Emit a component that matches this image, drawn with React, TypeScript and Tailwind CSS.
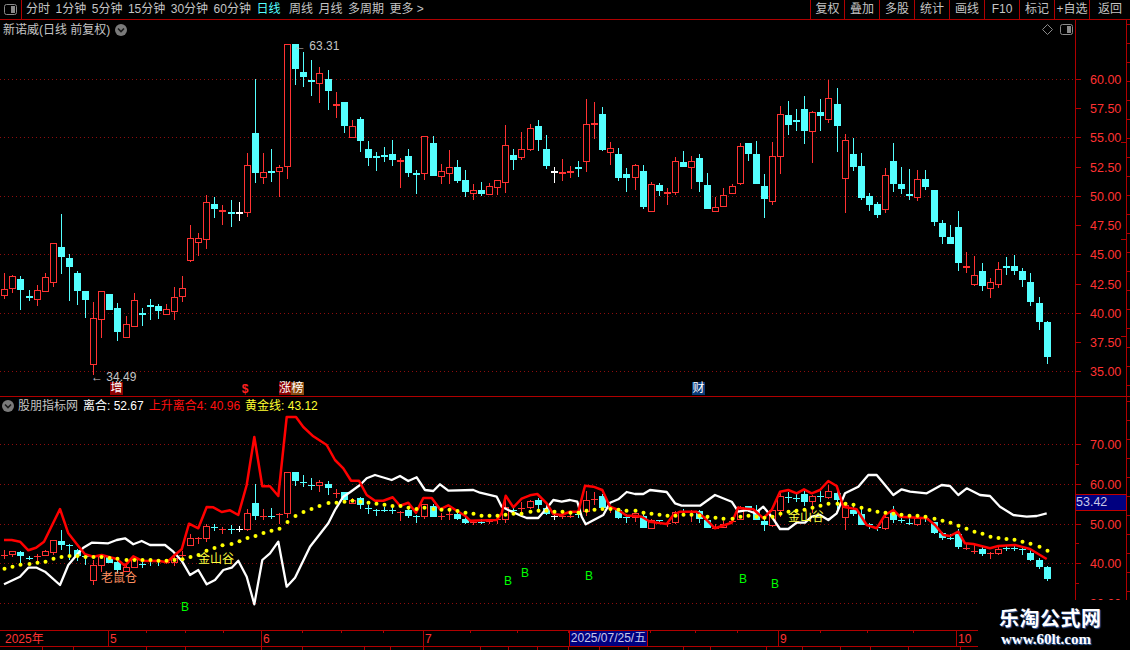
import React from "react";

type C = [number, number, number, number, "r" | "c" | "w"];

// high y, body top y, body bottom y, low y, kind
const candles: C[] = [
  [273,289,296,299,"r"],[275,276,289,293,"r"],[276,279,290,310,"c"],[290,296,299,301,"c"],[285,290,300,306,"r"],
  [273,277,292,292,"r"],[243,243,283,287,"r"],[214,247,257,274,"c"],[254,258,267,301,"c"],[271,273,291,305,"c"],
  [291,291,300,318,"c"],[302,318,365,375,"r"],[291,291,320,338,"r"],[294,294,310,310,"c"],[303,308,332,341,"c"],
  [316,324,338,338,"r"],[293,300,327,327,"r"],[308,313,315,326,"c"],[299,305,308,320,"c"],[304,306,311,319,"c"],
  [304,309,315,315,"r"],[287,297,312,320,"r"],[276,288,297,302,"r"],[225,238,261,262,"r"],[233,238,243,256,"r"],
  [195,202,240,249,"r"],[197,204,209,218,"c"],[205,210,213,225,"r"],[200,212,213,227,"c"],[202,212,213,221,"w"],
  [153,165,213,217,"r"],[79,133,173,183,"c"],[153,172,178,184,"r"],[149,171,172,182,"c"],[165,167,172,197,"r"],
  [44,44,167,179,"r"],[44,44,69,85,"c"],[52,72,77,87,"c"],[60,80,81,96,"c"],[67,73,84,103,"r"],
  [70,79,91,110,"c"],[92,104,105,118,"r"],[102,102,126,133,"c"],[120,126,138,138,"r"],[117,119,141,152,"c"],
  [141,149,158,166,"c"],[152,156,157,171,"c"],[147,155,158,162,"c"],[140,154,160,166,"c"],[158,160,162,188,"r"],
  [149,156,173,177,"c"],[170,173,176,194,"c"],[136,136,174,180,"r"],[136,143,176,176,"c"],[164,171,177,184,"r"],
  [150,167,174,184,"r"],[160,167,181,183,"c"],[170,180,192,197,"c"],[184,190,194,200,"r"],[182,190,194,196,"c"],
  [183,186,195,195,"r"],[180,180,188,195,"r"],[125,145,183,193,"r"],[149,155,160,170,"c"],[132,149,158,160,"r"],
  [124,128,150,151,"r"],[120,126,140,151,"c"],[135,149,166,169,"c"],[167,171,172,183,"w"],[159,172,174,181,"r"],
  [166,171,172,178,"r"],[161,167,168,177,"c"],[99,124,162,172,"r"],[102,123,125,139,"r"],[107,114,150,151,"c"],
  [142,148,153,165,"r"],[148,154,178,181,"c"],[168,174,178,192,"c"],[164,165,178,190,"r"],[165,171,207,209,"c"],
  [182,184,212,212,"r"],[183,185,191,196,"c"],[188,192,194,205,"r"],[157,161,193,195,"r"],[151,162,167,167,"c"],
  [156,161,168,189,"r"],[154,158,182,192,"c"],[173,185,209,209,"c"],[197,207,212,212,"r"],[188,195,207,207,"r"],
  [184,186,194,194,"r"],[143,146,184,185,"r"],[143,143,154,161,"c"],[141,154,184,184,"c"],[174,186,199,218,"c"],
  [142,156,202,205,"r"],[106,114,157,174,"r"],[101,115,125,135,"c"],[109,120,122,131,"c"],[96,109,131,144,"c"],
  [111,112,132,163,"r"],[99,112,116,131,"c"],[80,98,120,123,"r"],[88,104,126,152,"c"],[134,140,179,213,"r"],
  [138,154,167,171,"c"],[153,166,198,200,"c"],[193,196,205,211,"c"],[202,204,215,218,"c"],[168,175,210,213,"r"],
  [143,161,184,192,"c"],[167,184,189,194,"c"],[169,194,197,200,"c"],[170,179,198,201,"r"],[170,179,187,190,"c"],
  [190,190,222,226,"c"],[220,223,237,244,"c"],[225,237,244,244,"c"],[211,227,263,271,"c"],[252,266,267,273,"r"],
  [256,275,285,286,"r"],[263,271,286,291,"c"],[278,282,289,298,"r"],[262,269,285,288,"r"],[257,266,267,275,"c"],
  [255,266,271,275,"c"],[268,271,280,287,"c"],[273,282,302,306,"c"],[297,303,322,330,"c"],[321,322,357,364,"c"],
];

const cx = (i: number) => Math.round(4.3 + 8.08 * i);

const sec = (ox: number, oy: number, a: number[]) => {
  const out: [number, number][] = [];
  for (let i = 0; i < a.length; i += 2) out.push([ox + a[i] / 3, oy + a[i + 1] / 3]);
  return out;
};
const merge = (...s: [number, number][][]) => {
  const out: [number, number][] = [];
  s.forEach((p) =>
    p.forEach((q) => {
      if (!out.length || q[0] > out[out.length - 1][0]) out.push(q);
    })
  );
  return out.map((q) => `${q[0].toFixed(1)},${q[1].toFixed(1)}`).join(" ");
};

const redLine = merge(
  sec(0, 395, [12,435,35,435,60,440,85,466,108,458,132,440,180,342,205,415,230,447,255,478,280,485,305,480,330,487,350,492,375,512,400,484,425,497,450,498,475,497,500,502,520,484,545,463,567,386,595,400,620,336,640,337,665,351,690,346,715,360,740,270,763,126,787,274,810,274,835,303,860,66,888,66,910,96,940,124,980,150,1005,195,1030,220,1050,252]),
  sec(340, 450, [0,47,20,75,33,92,57,92,80,135,105,152,130,152,158,142,180,167,205,158,228,188,250,144,275,144,300,178,325,166,350,182,375,197,390,212,470,210,485,190,497,137,520,172,545,146,570,136,592,132,620,160,640,192,665,195,690,185,715,185,735,107,760,110,787,120,810,170,835,180,860,197,885,197,905,200,930,215,980,222,1000,195,1020,185,1070,185,1090,200,1125,235,1175,218,1195,172]),
  sec(730, 450, [0,222,10,215,30,175,70,178,100,205,125,180,150,125,175,120,200,130,222,118,245,130,270,120,295,93,320,108,340,170,380,178,410,225,440,235,465,195,490,180,510,200,590,205,615,225,640,255,660,258,685,245,705,280,730,282,780,295,805,288,855,285,900,297,950,327])
);

const whiteLine = merge(
  sec(0, 395, [12,568,60,545,85,518,110,518,135,530,180,570,205,510,230,480,250,458,275,443,325,445,350,435,375,430,400,448,425,438,450,450,495,450,520,470,545,497,570,540,595,525,620,568,645,555,670,525,695,518,715,497,740,545,763,628,787,495,810,475,835,440,860,575,885,548,930,455,985,385,1005,345,1030,305,1050,292]),
  sec(340, 450, [30,120,60,105,80,85,105,75,155,90,180,78,205,93,230,82,255,120,280,123,300,103,325,122,400,120,420,128,470,140,485,170,505,180,545,198,560,204,595,204,620,175,640,150,665,155,690,150,712,155,725,200,737,223,790,195,810,158,835,148,860,126,885,132,910,132,930,120,980,126,1005,160,1025,167,1080,167,1125,135,1175,155,1195,185]),
  sec(730, 450, [20,195,50,180,75,190,100,170,125,200,150,237,175,237,200,218,225,218,245,200,270,195,295,210,320,190,345,130,385,110,415,75,440,75,490,135,515,118,540,125,590,130,635,105,660,108,685,135,710,115,750,135,780,138,810,170,850,195,890,200,920,198,950,190])
);

const dots = [
  ...[521,515,509,507,503,500,491,486,483,483,486,486,486,489,491,495,495,495,495,497,497,495,493,486,480,467,459,451,447,439,429,423,414,407,401,381,363,351,342,333,324,323].map((v) => 395 + v / 3),
  ...[155,152,155,158,161,164,168,168,173,177,173,177,179,179,183,188,191,197,197,197,194,191,191,185,182,182,185,185,188,188,182,179,177,177,179,182,182,188,191,194,197,197,194,194,197,200,203,206,206,200].map((v) => 450 + v / 3),
  ...[197,200,203,200,191,185,182,179,173,167,161,161,161,164,173,180,185,188,191,194,197,197,200,206,212,218,227,236,245,251,260,264,267,269,275,281,290,302].map((v) => 450 + v / 3),
];

const RED = "#ff3232";
const CYAN = "#54ffff";

function Candle({ c, i, map, thick }: { c: C; i: number; map: (y: number) => number; thick: boolean }) {
  const x = cx(i);
  const hi = map(c[0]);
  const top = map(c[1]);
  const bot = Math.max(map(c[2]), top + 1);
  const lo = map(c[3]);
  const col = c[4] === "r" ? RED : c[4] === "c" ? CYAN : "#ffffff";
  const thin = bot - top < 3.5;
  return (
    <g shapeRendering="crispEdges">
      <rect x={x} y={hi} width={1} height={Math.max(lo - hi, 1)} fill={col} />
      {thin ? (
        <rect x={x - 3} y={top} width={7} height={thick ? 2 : 1} fill={col} />
      ) : c[4] === "r" ? (
        <rect x={x - 2.5} y={top + 0.5} width={6} height={bot - top - 1} fill="#000" stroke={col} strokeWidth={1} />
      ) : (
        <rect x={x - 3} y={top} width={7} height={bot - top} fill={col} />
      )}
    </g>
  );
}

const Grid = ({ ys, to = 1075 }: { ys: number[]; to?: number }) => (
  <g shapeRendering="crispEdges">
    {ys.map((y) => (
      <line key={y} x1={0} x2={to} y1={y + 0.5} y2={y + 0.5} stroke="#8e0d0d" strokeDasharray="1 3" />
    ))}
  </g>
);

function Axis({ y0, h, labels, minors, side }: { y0: number; h: number; labels: [string, number][]; minors: number[]; side: number[] }) {
  const rights: number[] = [];
  for (let y = y0 + 4; y < y0 + h; y += 19) rights.push(y);
  return (
    <svg width={55} height={h} viewBox={`1075 ${y0} 55 ${h}`} className="block shrink-0 self-start">
      <g shapeRendering="crispEdges" stroke="#b00000">
        <line x1={1075.5} x2={1075.5} y1={y0} y2={y0 + h} strokeWidth={1.5} />
        <line x1={1126.5} x2={1126.5} y1={y0} y2={y0 + h} />
        {labels.map(([l, y]) => (
          <line key={l} x1={1075} x2={1081} y1={y + 0.5} y2={y + 0.5} />
        ))}
        {minors.map((y) => (
          <line key={y} x1={1075} x2={1079} y1={y + 0.5} y2={y + 0.5} />
        ))}
        {side.map((y) => (
          <line key={y} x1={1121} x2={1126} y1={y + 0.5} y2={y + 0.5} />
        ))}
        {rights.map((y) => (
          <line key={y} x1={1127} x2={1130} y1={y + 0.5} y2={y + 0.5} />
        ))}
      </g>
      {labels.map(([l, y]) => (
        <text key={l} x={1090} y={y + 5} fontSize={12.5} fill={RED} fontFamily="'Liberation Sans', sans-serif">
          {l}
        </text>
      ))}
    </svg>
  );
}

const CJK = "font-['Liberation_Sans','Noto_Sans_CJK_SC',sans-serif]";

const ChevronDot = () => (
  <svg width={12} height={12} viewBox="0 0 12 12" className="block">
    <circle cx={6} cy={6} r={6} fill="#7a7a7a" />
    <path d="M3 4.5 L6 7.5 L9 4.5" fill="none" stroke="#1a1a1a" strokeWidth={1.6} />
  </svg>
);

const Split = () => (
  <svg width={13} height={11} viewBox="0 0 13 11" className="block">
    <rect x={0.5} y={0.5} width={12} height={10} rx={2} fill="none" stroke="#8a8a8a" />
    <rect x={7} y={2} width={4} height={7} fill="#8a8a8a" />
  </svg>
);

const tabs = ["分时", "1分钟", "5分钟", "15分钟", "30分钟", "60分钟", "日线", "周线", "月线", "多周期", "更多 >"];
const btns: [string, string][] = [
  ["复权", "w-[34px]"],
  ["叠加", "w-[35px]"],
  ["多股", "w-[35px]"],
  ["统计", "w-[35px]"],
  ["画线", "w-[35px]"],
  ["F10", "w-[35px]"],
  ["标记", "w-[35px]"],
  ["+自选", "w-[35px]"],
  ["返回", "w-[41px]"],
];

const topGrid = [79, 137, 196, 254, 313, 371];
const botGrid = [444, 484, 524, 563, 603];
const botMap = (y: number) => Math.round(484.5 + (y - 79.5) * 0.3388);
const idMap = (y: number) => y;

const timeMajor: [string, number, number][] = [
  ["2025年", 5, 0],
  ["5", 110, 108],
  ["6", 263, 261],
  ["7", 425, 423],
  ["9", 780, 778],
  ["10", 958, 956],
];
const timeTicks = [146, 185, 223, 302, 341, 383, 470, 517, 568, 650, 695, 737, 820, 867, 913];
const lowTicks = [42, 73, 146, 185, 261, 302, 364, 390, 423, 480, 508, 537, 568, 599, 628, 683, 710, 766, 802, 840, 870, 908, 960];

const Bs: [number, number][] = [[185, 607], [508, 581], [525, 573], [589, 576], [743, 579], [775, 584]];

export default function App() {
  return (
    <div className={`relative w-[1130px] h-[650px] bg-black overflow-hidden flex flex-col ${CJK}`}>
      {/* toolbar */}
      <div className="h-[20px] shrink-0 flex border-b border-[#b00000] text-[12px] leading-[19px] text-[#c4c4c4]">
        <div className="w-[22px] shrink-0 flex items-center justify-center border-r border-[#b00000]">
          <Split />
        </div>
        <div className="flex-1 flex gap-[5.5px] pl-[4px]">
          {tabs.map((t) => (
            <span key={t} className={t === "日线" ? "text-[#54ffff] mr-[3px]" : ""}>
              {t}
            </span>
          ))}
        </div>
        <div className="flex">
          {btns.map(([t, w]) => (
            <div key={t} className={`${w} border-l border-[#b00000] flex items-center justify-center whitespace-nowrap`}>
              {t}
            </div>
          ))}
        </div>
      </div>

      {/* price panel */}
      <div className="relative h-[377px] shrink-0 flex border-b border-[#b00000]">
        <svg width={1075} height={376} viewBox="0 20 1075 376" className="block shrink-0">
          <Grid ys={topGrid} />
          {candles.map((c, i) => (
            <Candle key={i} c={c} i={i} map={idMap} thick />
          ))}
          <text x={294} y={50} fontSize={12} fill="#c4c4c4" fontFamily="'Liberation Sans', sans-serif">← 63.31</text>
          <text x={91} y={381} fontSize={12} fill="#c4c4c4" fontFamily="'Liberation Sans', sans-serif">← 34.49</text>
        </svg>
        <Axis
          y0={20}
          h={376}
          labels={[["60.00", 79], ["57.50", 108], ["55.00", 137], ["52.50", 167], ["50.00", 196], ["47.50", 225], ["45.00", 254], ["42.50", 284], ["40.00", 313], ["37.50", 342], ["35.00", 371]]}
          minors={[]}
          side={[142, 239, 336]}
        />
        <div className="absolute left-[3px] top-[2px] flex items-center gap-[5px] text-[12px] leading-[16px] text-[#c4c4c4]">
          <span>新诺威(日线 前复权)</span>
          <ChevronDot />
        </div>
        <div className="absolute left-[1042px] top-[4px] flex items-center gap-[7px]">
          <svg width={11} height={11} viewBox="0 0 11 11" className="block">
            <path d="M5.5 0.5 L10.5 5.5 L5.5 10.5 L0.5 5.5 Z" fill="none" stroke="#8a8a8a" />
          </svg>
          <Split />
        </div>
        {/* event markers */}
        <span className="absolute left-[110px] top-[362px] w-[13px] h-[13px] bg-[#8c0000] text-white text-[12px] leading-[13px] text-center">增</span>
        <span className="absolute left-[241px] top-[361px] w-[8px] h-[14px] text-[#ff2020] text-[12px] leading-[16px] font-bold text-center">$</span>
        <span className="absolute left-[279px] top-[362px] w-[12px] h-[13px] bg-[#8c0000] text-white text-[12px] leading-[13px] text-center">涨</span>
        <span className="absolute left-[291px] top-[362px] w-[13px] h-[13px] bg-[#8a4a10] text-white text-[12px] leading-[13px] text-center">榜</span>
        <span className="absolute left-[692px] top-[362px] w-[13px] h-[13px] bg-[#0a3a78] text-white text-[12px] leading-[13px] text-center">财</span>
      </div>

      {/* indicator panel */}
      <div className="relative h-[233px] shrink-0 flex">
        <svg width={1075} height={233} viewBox="0 397 1075 233" className="block shrink-0">
          <Grid ys={botGrid} />
          {candles.map((c, i) => (
            <Candle key={i} c={c} i={i} map={botMap} thick={false} />
          ))}
          <polyline points={whiteLine} fill="none" stroke="#ffffff" strokeWidth={2.3} strokeLinejoin="round" />
          <polyline points={redLine} fill="none" stroke="#ff0000" strokeWidth={2.5} strokeLinejoin="round" />
          {dots.map((y, i) => (
            <circle key={i} cx={cx(i) + 0.5} cy={y} r={2} fill="#ffff00" />
          ))}
          <g fontFamily="'Liberation Sans','Noto Sans CJK SC',sans-serif" fontSize={12}>
            <text x={101} y={582} fill="#ff9060">老鼠仓</text>
            <text x={198} y={563} fill="#ffff40">金山谷</text>
            <text x={788} y={521} fill="#ffff40">金山谷</text>
          </g>
          <g fontFamily="'Liberation Sans',sans-serif" fontSize={12} fill="#00ff00">
            {Bs.map(([x, y]) => (
              <text key={x} x={x} y={y + 4} textAnchor="middle">B</text>
            ))}
          </g>
        </svg>
        <Axis
          y0={397}
          h={203}
          labels={[["70.00", 444], ["60.00", 484], ["50.00", 524], ["40.00", 563], ["30.00", 603]]}
          minors={[464, 504, 543, 583]}
          side={[]}
        />
        <div className="absolute left-[2px] top-[1px] flex items-center text-[12px] leading-[16px] whitespace-nowrap">
          <ChevronDot />
          <span className="ml-[4px] text-[#c4c4c4]">股朋指标网</span>
          <span className="ml-[5px] text-white">离合: 52.67</span>
          <span className="ml-[5px] text-[#ff1010]">上升离合4: 40.96</span>
          <span className="ml-[5px] text-[#ffff30]">黄金线: 43.12</span>
        </div>
        <div className="absolute left-[1076px] top-[97px] w-[51px] h-[17px] bg-[#000080] border-y border-r border-[#c00000] text-[#c8c8e8] text-[12.5px] leading-[15px]">
          53.42
        </div>
      </div>

      {/* time axis */}
      <div className="relative h-[17px] shrink-0 w-[978px] border-y border-[#b00000]">
        <svg width={978} height={15} viewBox="0 631 978 15" className="block">
          <g shapeRendering="crispEdges" stroke="#b00000">
            {timeMajor.slice(1).map(([l, , x]) => (
              <line key={l} x1={x + 0.5} x2={x + 0.5} y1={631} y2={646} />
            ))}
            {timeTicks.map((x) => (
              <line key={x} x1={x + 0.5} x2={x + 0.5} y1={631} y2={633} />
            ))}
          </g>
          <g fontSize={12} fill={RED} fontFamily="'Liberation Sans','Noto Sans CJK SC',sans-serif">
            {timeMajor.map(([l, x]) => (
              <text key={l} x={x} y={643}>{l}</text>
            ))}
          </g>
        </svg>
        <div className="absolute left-[569px] top-0 w-[79px] h-[15px] bg-[#000080] border-x border-[#c00000] text-[#c8c8e8] text-[12px] leading-[15px] text-center whitespace-nowrap">
          2025/07/25/五
        </div>
      </div>

      {/* clipped row under the axis */}
      <svg width={978} height={3} viewBox="0 647 978 3" className="block shrink-0">
        <g shapeRendering="crispEdges" stroke="#b00000">
          {lowTicks.map((x) => (
            <line key={x} x1={x + 0.5} x2={x + 0.5} y1={647} y2={650} />
          ))}
        </g>
      </svg>

      {/* watermark */}
      <div className="absolute left-[978px] top-[600px] w-[152px] h-[50px] bg-black flex flex-col items-start pt-[7px] pl-[21px]">
        <div className="text-white text-[20px] leading-[24px] font-bold tracking-[0.5px] [text-shadow:1px_1px_1px_#3a5a9a]">乐淘公式网</div>
        <div className="ml-[2px] font-['Liberation_Serif',serif] text-white text-[15px] leading-[16px] font-bold [text-shadow:1px_1px_1px_#3a6ab0]">www.60lt.com</div>
      </div>
    </div>
  );
}
